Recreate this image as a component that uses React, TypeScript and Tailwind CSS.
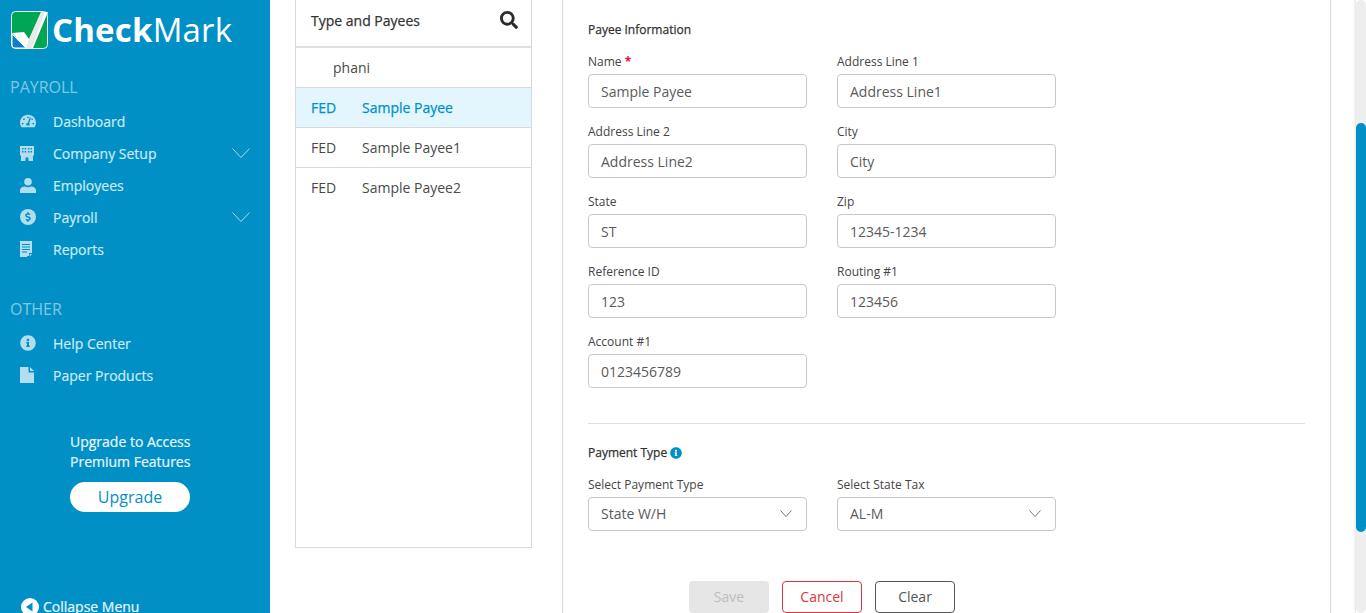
import React from "react";
import { FaTachometerAlt, FaInfoCircle, FaSearch, FaDollarSign } from "react-icons/fa";

function Logo() {
  return (
    <svg width="38" height="38" viewBox="0 0 38 38" className="shrink-0">
      <rect x="0.5" y="0.5" width="36" height="37" rx="4" fill="#00a651" stroke="#e8f5ee" />
      <path d="M1 23 L1 34 Q1 37 4 37 L15 37 Z" fill="#0b80c4" stroke="#ffffff" strokeWidth="1" />
      <path d="M1 22 L13 21 L18 28 L30 1 L37 1 L22 37 L15 37 Z" fill="#ffffff" />
      <path d="M18 28 L30 1 L34 1 L21 37 L15 37 Z" fill="#dcdcdc" opacity="0.6" />
    </svg>
  );
}

function BuildingIcon() {
  return (
    <svg width="14" height="15" viewBox="0 0 14 15" fill="currentColor">
      <path d="M0 0 H14 V9.5 H13 V15 H8.5 V11.5 H5.5 V15 H1 V9.5 H0 Z" />
      <g fill="#0090c6">
        <rect x="2" y="2" width="1.5" height="1.5" />
        <rect x="4.6" y="2" width="1.5" height="1.5" />
        <rect x="7.9" y="2" width="1.5" height="1.5" />
        <rect x="10.5" y="2" width="1.5" height="1.5" />
        <rect x="2" y="5" width="1.5" height="1.5" />
        <rect x="4.6" y="5" width="1.5" height="1.5" />
        <rect x="7.9" y="5" width="1.5" height="1.5" />
        <rect x="10.5" y="5" width="1.5" height="1.5" />
      </g>
    </svg>
  );
}

function UserIcon() {
  return (
    <svg width="16" height="15" viewBox="0 0 16 15" fill="currentColor">
      <circle cx="8" cy="3.8" r="3.8" />
      <path d="M0 15 V12.5 C0 10 2.5 8.5 5 8.5 Q8 10 11 8.5 C13.5 8.5 16 10 16 12.5 V15 Z" />
    </svg>
  );
}

function ReportIcon() {
  return (
    <svg width="12" height="16" viewBox="0 0 12 16" fill="currentColor">
      <path d="M0 0 H12 V12 H9 V15 H7 V16 H0 Z" />
      <path d="M9.8 13 H12 L9.8 15.4 Z" />
      <g fill="#0090c6">
        <rect x="2" y="3" width="8" height="1" />
        <rect x="2" y="5.5" width="8" height="1" />
        <rect x="2" y="8" width="8" height="1" />
        <rect x="2" y="10.5" width="5" height="1" />
      </g>
    </svg>
  );
}

function PaperIcon() {
  return (
    <svg width="14" height="16" viewBox="0 0 14 16" fill="currentColor">
      <path d="M0 0 H8.5 V5.5 H14 V16 H0 Z" />
      <path d="M10 0 L14 4 H10 Z" />
    </svg>
  );
}

function Caret({ w, h, color }: { w: number; h: number; color: string }) {
  return (
    <svg width={w} height={h} viewBox={`0 0 ${w} ${h}`} fill="none" stroke={color} strokeWidth="1" className="shrink-0">
      <path d={`M0.5 0.5 L${w / 2} ${h - 0.5} L${w - 0.5} 0.5`} />
    </svg>
  );
}

function NavItem({ icon, label, caret }: { icon: React.ReactNode; label: string; caret?: boolean }) {
  return (
    <div className="h-8 flex items-center pl-5 pr-[20px] text-[14px] text-[#cdeaf5] font-medium [-webkit-text-stroke:0.2px]">
      <div className="w-[33px] flex items-center text-[#b3deef]">{icon}</div>
      <span className="flex-1">{label}</span>
      {caret && <Caret w={18} h={10} color="#a5d8ec" />}
    </div>
  );
}

function Sidebar() {
  return (
    <aside className="w-[270px] shrink-0 h-full bg-[#0090c6] flex flex-col overflow-hidden">
      <div className="flex items-center pl-[11px] pt-[11px] h-[49px]">
        <Logo />
        <span className="ml-[3px] text-[33px] leading-[38px] text-white tracking-[0.2px]">
          <span className="font-bold">Check</span>
          <span className="font-normal">Mark</span>
        </span>
      </div>
      <div className="mt-[27px] pl-[10px] text-[16px] leading-[22px] text-[#80c8e3]">PAYROLL</div>
      <nav className="mt-[7px]">
        <NavItem icon={<FaTachometerAlt size={16} />} label="Dashboard" />
        <NavItem icon={<BuildingIcon />} label="Company Setup" caret />
        <NavItem icon={<UserIcon />} label="Employees" />
        <NavItem
          icon={
            <span className="w-4 h-4 rounded-full bg-[#b3deef] flex items-center justify-center">
              <FaDollarSign size={10} className="text-[#0090c6]" />
            </span>
          }
          label="Payroll"
          caret
        />
        <NavItem icon={<ReportIcon />} label="Reports" />
      </nav>
      <div className="mt-[33px] pl-[10px] text-[16px] leading-[22px] text-[#80c8e3]">OTHER</div>
      <nav className="mt-[7px]">
        <NavItem icon={<FaInfoCircle size={16} />} label="Help Center" />
        <NavItem icon={<PaperIcon />} label="Paper Products" />
      </nav>
      <div className="mt-[41px] pl-[70px] text-[14px] leading-[20px] font-medium text-[#eaf6fb] [-webkit-text-stroke:0.2px]">
        <div>Upgrade to Access</div>
        <div>Premium Features</div>
        <div className="mt-[10px] w-[120px] h-[30px] rounded-full bg-white text-[#0090c6] text-[16px] font-normal flex items-center justify-center [-webkit-text-stroke:0px]">
          Upgrade
        </div>
      </div>
      <div className="mt-[84px] pl-[21px] flex items-center text-[14px] font-medium text-[#eaf6fb] [-webkit-text-stroke:0.2px]">
        <svg width="18" height="18" viewBox="0 0 18 18" className="mr-[4px]">
          <circle cx="9" cy="9" r="9" fill="#ffffff" />
          <path d="M5 9 L11.5 4.5 V13.5 Z" fill="#0090c6" />
        </svg>
        <span>Collapse Menu</span>
      </div>
    </aside>
  );
}

function PayeeList() {
  return (
    <div className="w-[237px] h-[548px] shrink-0 border-x border-b border-[#d9d9d9] flex flex-col">
      <div className="h-[48px] shrink-0 border-b-2 border-[#e0e0e0] flex items-center justify-between pb-[6px] pl-[15px] pr-[13px] text-[14px] font-medium text-[#333] [-webkit-text-stroke:0.25px]">
        <span>Type and Payees</span>
        <FaSearch size={18} className="text-[#2b2b2b]" />
      </div>
      <Row type="" name="phani" indent />
      <Row type="FED" name="Sample Payee" active />
      <Row type="FED" name="Sample Payee1" />
      <Row type="FED" name="Sample Payee2" last />
    </div>
  );
}

function Row({ type, name, active, indent, last }: { type: string; name: string; active?: boolean; indent?: boolean; last?: boolean }) {
  if (active) {
    return (
      <div className="h-[40px] shrink-0 border-b border-[#d9d9d9] bg-[#e3f6fd] flex items-center pl-[15px] text-[14px] font-medium text-[#0090c6] [-webkit-text-stroke:0.25px]">
        <span className="w-[51px]">{type}</span>
        <span>{name}</span>
      </div>
    );
  }
  return (
    <div className={last ? "h-[40px] shrink-0 border-b border-transparent flex items-center pl-[15px] text-[14px] text-[#4a4a4a]" : "h-[40px] shrink-0 border-b border-[#d9d9d9] flex items-center pl-[15px] text-[14px] text-[#4a4a4a]"}>
      <span className={indent ? "w-[22px]" : "w-[51px]"}>{type}</span>
      <span>{name}</span>
    </div>
  );
}

function Field({ label, value, required }: { label: string; value: string; required?: boolean }) {
  return (
    <div>
      <div className="h-[18px] pt-[1px] text-[12px] leading-[18px] text-[#444] mb-[4px]">
        {label}
        {required && <span className="text-[#e8112d] font-bold"> *</span>}
      </div>
      <div className="h-[34px] border border-[#c8c8c8] rounded-[4px] flex items-center px-[12px] text-[14px] text-[#5a5a5a]">
        {value}
      </div>
    </div>
  );
}

function SelectField({ label, value }: { label: string; value: string }) {
  return (
    <div>
      <div className="h-[18px] text-[12px] leading-[18px] text-[#444] mb-[3px]">{label}</div>
      <div className="h-[34px] border border-[#c8c8c8] rounded-[4px] flex items-center justify-between pb-[2px] pl-[12px] pr-[14px] text-[14px] text-[#5a5a5a]">
        <span>{value}</span>
        <Caret w={12} h={7} color="#777" />
      </div>
    </div>
  );
}

function PayeeForm() {
  return (
    <div className="w-[769px] shrink-0 h-full border-x border-[#d9d9d9] pl-[25px] pr-[25px] pt-[21px]">
      <div className="text-[12px] leading-[18px] font-medium text-[#333] [-webkit-text-stroke:0.25px]">Payee Information</div>
      <div className="mt-[13px] w-[468px] grid grid-cols-[219px_219px] gap-x-[30px] gap-y-[14px]">
        <Field label="Name" value="Sample Payee" required />
        <Field label="Address Line 1" value="Address Line1" />
        <Field label="Address Line 2" value="Address Line2" />
        <Field label="City" value="City" />
        <Field label="State" value="ST" />
        <Field label="Zip" value="12345-1234" />
        <Field label="Reference ID" value="123" />
        <Field label="Routing #1" value="123456" />
        <Field label="Account #1" value="0123456789" />
      </div>
      <div className="mt-[35px] border-t border-[#e0e0e0]" />
      <div className="mt-[20px] flex items-center text-[12px] leading-[18px] font-medium text-[#333] [-webkit-text-stroke:0.25px]">
        Payment Type
        <FaInfoCircle size={12} className="ml-[3px] text-[#0090c6]" />
      </div>
      <div className="mt-[14px] w-[468px] grid grid-cols-[219px_219px] gap-x-[30px]">
        <SelectField label="Select Payment Type" value="State W/H" />
        <SelectField label="Select State Tax" value="AL-M" />
      </div>
      <div className="mt-[50px] flex gap-[13px] pl-[101px] text-[14px]">
        <div className="w-[80px] h-[32px] pb-[2px] rounded-[4px] bg-[#e6e6e6] text-[#bdbdbd] flex items-center justify-center">Save</div>
        <div className="w-[80px] h-[32px] pb-[2px] rounded-[4px] border border-[#dc3545] text-[#dc3545] flex items-center justify-center">Cancel</div>
        <div className="w-[80px] h-[32px] pb-[2px] rounded-[4px] border border-[#555] text-[#555] flex items-center justify-center">Clear</div>
      </div>
    </div>
  );
}

function Scrollbar() {
  return (
    <div className="w-[10px] h-full shrink-0 rounded-full bg-[#eeeeee] pt-[123px]">
      <div className="h-[409px] rounded-full bg-[#0090c6]" />
    </div>
  );
}

export default function App() {
  return (
    <div className="h-[613px] w-full flex overflow-hidden bg-white font-['Open_Sans',sans-serif]">
      <Sidebar />
      <main className="flex-1 flex pl-[25px] gap-[30px] h-full pr-[25px] shadow-[inset_-3px_0_3px_-2px_rgba(0,0,0,0.12)]">
        <PayeeList />
        <PayeeForm />
      </main>
      <Scrollbar />
    </div>
  );
}
